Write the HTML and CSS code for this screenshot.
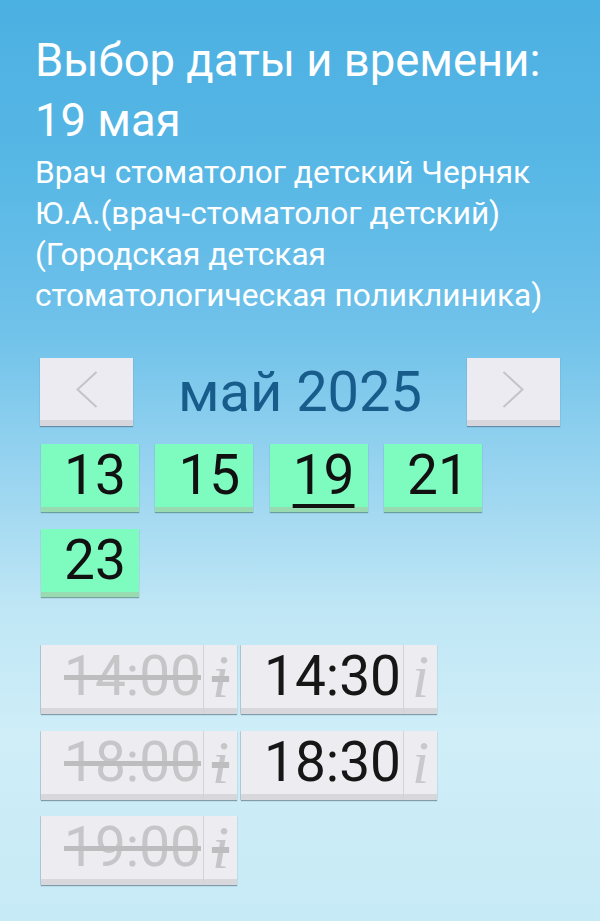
FILE: index.html
```html
<!DOCTYPE html>
<html lang="ru">
<head>
<meta charset="utf-8">
<title>Выбор даты и времени</title>
<link rel="stylesheet" href="styles.css">
</head>
<body>
<div class="page">
  <header class="head">
    <h1 class="title">Выбор даты и времени:<br>19 мая</h1>
    <p class="doctor">Врач стоматолог детский Черняк<br>Ю.А.(врач-стоматолог детский)<br>(Городская детская<br>стоматологическая поликлиника)</p>
  </header>

  <section class="calendar">
    <div class="month-nav">
      <button class="nav-btn" type="button" aria-label="Предыдущий месяц">
        <svg width="22" height="37" viewBox="0 0 22 37"><polyline points="20.5,1 1.5,18.5 20.5,36" fill="none" stroke="#c3c3c8" stroke-width="2"/></svg>
      </button>
      <div class="month">май 2025</div>
      <button class="nav-btn" type="button" aria-label="Следующий месяц">
        <svg width="22" height="37" viewBox="0 0 22 37"><polyline points="1.5,1 20.5,18.5 1.5,36" fill="none" stroke="#c3c3c8" stroke-width="2"/></svg>
      </button>
    </div>
    <div class="dates">
      <button class="date" type="button">13</button>
      <button class="date" type="button">15</button>
      <button class="date date-current" type="button"><span>19</span></button>
      <button class="date" type="button">21</button>
      <button class="date" type="button">23</button>
    </div>
  </section>

  <section class="times">
    <div class="slot slot-busy"><span class="slot-time">14:00</span><span class="slot-info">i</span></div>
    <div class="slot"><span class="slot-time">14:30</span><span class="slot-info">i</span></div>
    <div class="slot slot-busy"><span class="slot-time">18:00</span><span class="slot-info">i</span></div>
    <div class="slot"><span class="slot-time">18:30</span><span class="slot-info">i</span></div>
    <div class="slot slot-busy"><span class="slot-time">19:00</span><span class="slot-info">i</span></div>
  </section>
</div>
</body>
</html>
```
FILE: styles.css
```css
html, body {
  margin: 0;
  padding: 0;
}

body {
  min-height: 921px;
  font-family: Roboto, "Noto Sans", "Liberation Sans", sans-serif;
  background: linear-gradient(180deg, #4bb0e2 0%, #57b7e5 18%, #70c2ea 36%, #9ad5f0 52%, #bfe6f5 66%, #cfeef8 80%, #c6eaf6 100%);
}

.page {
  padding: 31px 0 0 0;
}

.head {
  padding-left: 35px;
  color: #ffffff;
}

.title {
  margin: 0;
  font-size: 45.4px;
  line-height: 60px;
  font-weight: 400;
}

.doctor {
  margin: 1px 0 0 0;
  font-size: 31.6px;
  line-height: 41px;
}

.calendar {
  margin: 42px 0 0 40px;
  width: 520px;
}

.month-nav {
  display: flex;
  justify-content: space-between;
  align-items: flex-start;
  height: 69px;
}

.nav-btn {
  width: 93px;
  height: 68px;
  margin: 0;
  padding: 0 0 6px 0;
  border: 0;
  background: #ebebf1;
  box-shadow: inset 0 -6px 0 #d6d6dc, 0 1px 1px rgba(70, 90, 110, 0.55);
  display: flex;
  align-items: center;
  justify-content: center;
}

.month {
  font-size: 56px;
  line-height: 69px;
  color: #185c8b;
}

.dates {
  display: flex;
  flex-wrap: wrap;
  column-gap: 16.3px;
  row-gap: 17px;
  margin-top: 17px;
  padding-left: 1px;
}

.date {
  width: 98px;
  height: 68px;
  margin: 0;
  padding: 0 0 5px 10px;
  border: 0;
  font-family: Roboto, "Noto Sans", "Liberation Sans", sans-serif;
  font-size: 55px;
  line-height: 63px;
  color: #111111;
  background: #7efcc0;
  box-shadow: inset 0 -5px 0 #98dbb0, 0 1px 1px rgba(60, 110, 90, 0.55);
  text-align: center;
}

.date-current span {
  text-decoration: underline;
  text-decoration-thickness: 4px;
  text-underline-offset: 10px;
}

.times {
  margin: 48px 0 0 41px;
  width: 520px;
  display: flex;
  flex-wrap: wrap;
  column-gap: 4px;
  row-gap: 16.5px;
}

.slot {
  width: 196px;
  height: 69px;
  display: flex;
  background: #ececf1;
  box-shadow: inset 0 -6px 0 #d7d7dc, 0 1px 1px rgba(70, 90, 110, 0.55), -1px 0 0 rgba(120, 140, 160, 0.25);
}

.slot-time {
  flex: 1;
  text-align: right;
  padding-right: 2px;
  font-size: 55px;
  line-height: 63px;
  color: #161616;
}

.slot-info {
  width: 33px;
  border-left: 1px solid #d2d2d7;
  text-align: center;
  font-family: "Liberation Serif", "DejaVu Serif", serif;
  font-style: italic;
  font-size: 62px;
  line-height: 63px;
  color: #c9c9cd;
}

.slot-busy .slot-time,
.slot-busy .slot-info {
  color: #c6c6c9;
  text-decoration: line-through;
  text-decoration-color: #bdbdc0;
}
```
